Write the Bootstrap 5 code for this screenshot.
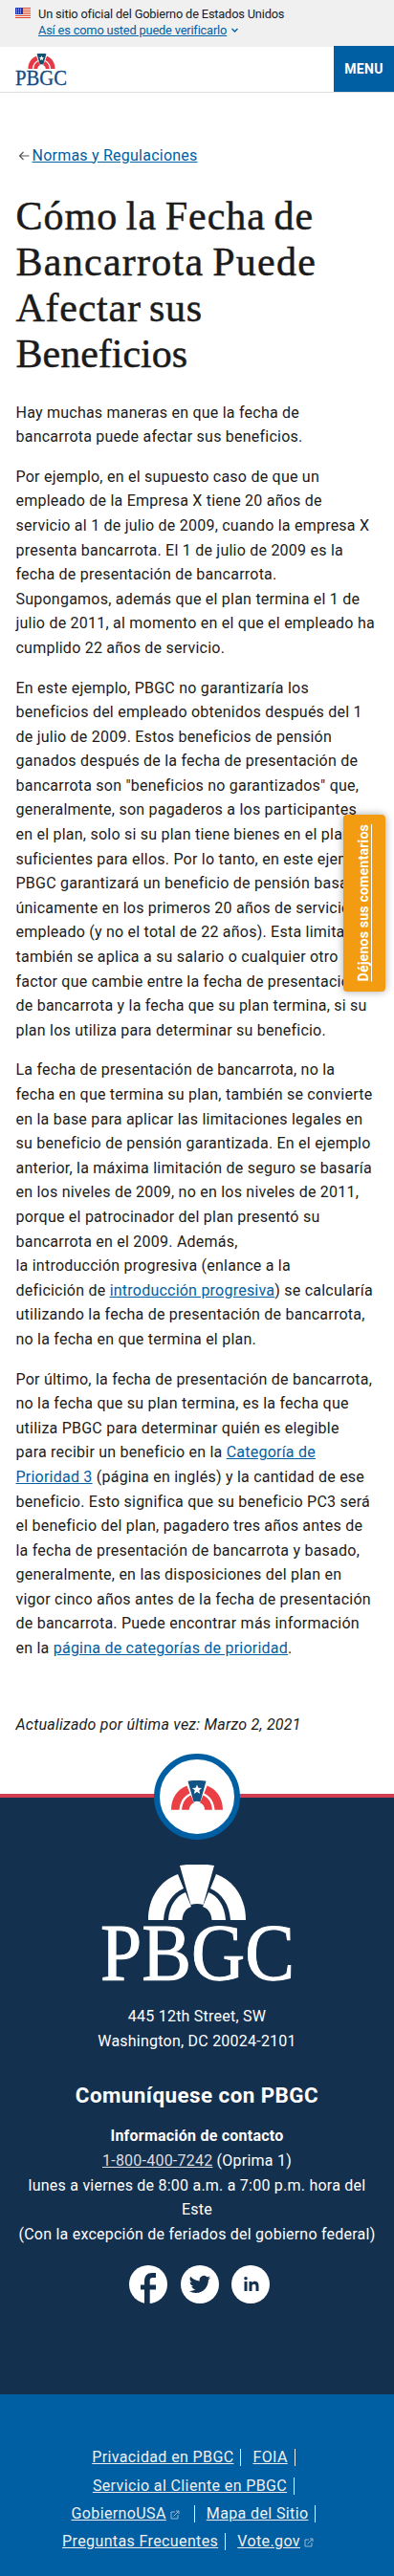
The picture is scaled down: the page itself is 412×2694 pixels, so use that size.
<!DOCTYPE html>
<html lang="es">
<head>
<meta charset="utf-8">
<meta name="viewport" content="width=device-width, initial-scale=1">
<title>Cómo la Fecha de Bancarrota Puede Afectar sus Beneficios | PBGC</title>
<link href="https://cdn.jsdelivr.net/npm/bootstrap@5.3.0/dist/css/bootstrap.min.css" rel="stylesheet">
<style>
body{font-family:Roboto,"Liberation Sans",sans-serif;font-size:16px;line-height:25.6px;letter-spacing:.23px;color:#1b1b1b;overflow-x:hidden}
a{color:#005ea2}
.gov-banner{background:#f0f0f0;height:49px;padding:7px 16px 0;font-size:12.8px;line-height:16.5px;letter-spacing:-.17px}
.gov-flag{margin:1px 8px 0 0;flex:none}
.site-head{height:48px;border-bottom:1px solid #dcdee0}
.site-logo{margin:6px 0 0 16px}
.menu-btn{width:63px;margin-top:-1px;background:#005ea2;color:#fff;font-weight:700;font-size:14px;letter-spacing:.3px;border:0;border-radius:0}
main{padding:52.7px 16.5px 58.6px;white-space:nowrap}
.back-arrow{margin:0 3px 0 2px}
.page-title{font-family:"Liberation Serif",serif;font-size:42px;line-height:48px;letter-spacing:1.02px;word-spacing:-3px;font-weight:400;margin:26.6px 0 24.7px;-webkit-text-stroke:.5px #1b1b1b}
.title-wide{letter-spacing:1.27px}
.title-snug{letter-spacing:.75px}
.title-tight{letter-spacing:0}
main p{margin:0 0 16px}
.updated{margin-top:54.8px}
.feedback{position:absolute;left:359px;top:852px;width:44px;height:185px;background:#f39c12;border-radius:4px;box-shadow:0 0 8px rgba(0,0,0,.35);z-index:3}
.feedback a{writing-mode:vertical-rl;transform:rotate(180deg);color:#fff;font-weight:700;font-size:14.2px;letter-spacing:.15px}
.foot-main{background:#14304f;border-top:4px solid #d03d50;height:628px;color:#fff;text-align:center;position:relative;white-space:nowrap}
.foot-main a{color:#dcdee0}
.seal{position:absolute;left:161px;top:-46px;width:90px;height:90px;border:6px solid #005ea2;border-radius:50%;background:#fff}
.seal svg{margin-top:22px;color:#e93f45;--wedge:#125384;--star:#fff}
.foot-logo{display:block;margin:0 auto;padding-top:70px;box-sizing:content-box}
.foot-address{margin-top:24.5px}
.foot-title{font-size:22.4px;font-weight:700;line-height:28px;margin:29.5px 0 16.5px;letter-spacing:.45px}
.foot-social{gap:13.3px;margin:20px 0 0 5px}
.foot-links{background:#005ea2;height:190px;padding:51.5px 7px 0 0;color:#fff;white-space:nowrap;text-align:center;line-height:29.4px;letter-spacing:.38px}
.foot-links a{color:#f0f0f0}
.foot-links .last-row{padding-right:12px}
.sep{display:inline-block;width:1px;height:18px;background:#f0f0f0;vertical-align:-4px;margin:0 12px 0 7px}
.sep-end{margin-right:0}
</style>
</head>
<body>
<svg width="0" height="0" class="position-absolute">
  <symbol id="fan" viewBox="0 0 102 58">
    <g fill="currentColor">
      <path d="M0 58C0 35 12 17 31 10L37 25C25 30 17 42 16 58Z"/>
      <path d="M21 58C22 43 29 33 39 29L45 44C39 46 36 51 35.500 58Z"/>
      <path d="M102 58C102 35 90 17 71 10L65 25C77 30 85 42 86 58Z"/>
      <path d="M81 58C80 43 73 33 63 29L57 44C63 46 66 51 66.500 58Z"/>
    </g>
    <path d="M33 1Q51-2 69 1L57.500 42Q51 40 44.500 42Z" fill="var(--wedge)"/>
    <path d="M51 8l2.700 6.400 6.900.500-5.300 4.400 1.700 6.700-6-3.700-6 3.700 1.700-6.700-5.300-4.400 6.900-.5z" fill="var(--star)"/>
  </symbol>
</svg>

<div class="gov-banner d-flex">
  <svg class="gov-flag" width="16" height="11" viewBox="0 0 16 11"><rect width="16" height="11" fill="#fff"/><path d="M0 .5h16M0 2.500h16M0 4.500h16M0 6.500h16M0 8.500h16M0 10.500h16" stroke="#db3e1f"/><rect width="8" height="7" fill="#1e33b1"/><path d="M1 1.500h6M1 3.500h6M1 5.500h6" stroke="#fff" stroke-dasharray="1 1" stroke-width=".8"/></svg>
  <div>Un sitio oficial del Gobierno de Estados Unidos<br><a href="#">Así es como usted puede verificarlo</a><svg class="ms-1" width="9" height="6" viewBox="0 0 9 6"><path d="M1.500 1l3 3 3-3" fill="none" stroke="#005ea2" stroke-width="1.300"/></svg></div>
</div>
<header class="site-head d-flex justify-content-between">
  <a class="site-logo" href="#"><svg class="d-block" width="56" height="36" viewBox="0 0 56 36"><use href="#fan" x="13" y="1" width="29" height="16" color="#e63946" style="--wedge:#11506e;--star:#fff"/><text x="0" y="33.500" font-family="Liberation Serif" font-size="23" textLength="54" lengthAdjust="spacingAndGlyphs" fill="#134a80" stroke="#134a80" stroke-width=".3" letter-spacing="0">PBGC</text></svg></a>
  <button class="menu-btn btn p-0">MENU</button>
</header>

<main>
<div><svg width="12" height="10" viewBox="0 0 12 10" class="back-arrow"><path d="M11.500 5H2M5.500 1L1.500 5l4 4" fill="none" stroke="#555" stroke-width="1.200"/></svg><a href="#">Normas y Regulaciones</a></div>
<h1 class="page-title">Cómo la Fecha de<br><span class="title-wide">Bancarrota Puede</span><br><span class="title-snug">Afectar sus</span><br><span class="title-tight">Beneficios</span></h1>
<p>Hay muchas maneras en que la fecha de<br>bancarrota puede afectar sus beneficios.</p>
<p>Por ejemplo, en el supuesto caso de que un<br>empleado de la Empresa X tiene 20 años de<br>servicio al 1 de julio de 2009, cuando la empresa X<br>presenta bancarrota. El 1 de julio de 2009 es la<br>fecha de presentación de bancarrota.<br>Supongamos, además que el plan termina el 1 de<br>julio de 2011, al momento en el que el empleado ha<br>cumplido 22 años de servicio.</p>
<p>En este ejemplo, PBGC no garantizaría los<br>beneficios del empleado obtenidos después del 1<br>de julio de 2009. Estos beneficios de pensión<br>ganados después de la fecha de presentación de<br>bancarrota son "beneficios no garantizados" que,<br>generalmente, son pagaderos a los participantes<br>en el plan, solo si su plan tiene bienes en el plan<br>suficientes para ellos. Por lo tanto, en este ejemplo,<br>PBGC garantizará un beneficio de pensión basado<br>únicamente en los primeros 20 años de servicio del<br>empleado (y no el total de 22 años). Esta limitación<br>también se aplica a su salario o cualquier otro<br>factor que cambie entre la fecha de presentación<br>de bancarrota y la fecha que su plan termina, si su<br>plan los utiliza para determinar su beneficio.</p>
<p>La fecha de presentación de bancarrota, no la<br>fecha en que termina su plan, también se convierte<br>en la base para aplicar las limitaciones legales en<br>su beneficio de pensión garantizada. En el ejemplo<br>anterior, la máxima limitación de seguro se basaría<br>en los niveles de 2009, no en los niveles de 2011,<br>porque el patrocinador del plan presentó su<br>bancarrota en el 2009. Además,<br>la introducción progresiva (enlance a la<br>deficición de <a href="#">introducción progresiva</a>) se calcularía<br>utilizando la fecha de presentación de bancarrota,<br>no la fecha en que termina el plan.</p>
<p>Por último, la fecha de presentación de bancarrota,<br>no la fecha que su plan termina, es la fecha que<br>utiliza PBGC para determinar quién es elegible<br>para recibir un beneficio en la <a href="#">Categoría de<br>Prioridad 3</a> (página en inglés) y la cantidad de ese<br>beneficio. Esto significa que su beneficio PC3 será<br>el beneficio del plan, pagadero tres años antes de<br>la fecha de presentación de bancarrota y basado,<br>generalmente, en las disposiciones del plan en<br>vigor cinco años antes de la fecha de presentación<br>de bancarrota. Puede encontrar más información<br>en la <a href="#">página de categorías de prioridad</a>.</p>
<div class="updated fst-italic">Actualizado por última vez: Marzo 2, 2021</div>
</main>

<div class="feedback d-flex align-items-center justify-content-center"><a href="#">Déjenos sus comentarios</a></div>

<footer>
<div class="foot-main">
  <div class="seal d-flex justify-content-center"><svg width="54" height="31"><use href="#fan" width="54" height="31"/></svg></div>
  <svg class="foot-logo" width="202" height="122" viewBox="0 0 202 122"><use href="#fan" x="50" y="0" width="102" height="58" color="#fff" style="--wedge:#fff;--star:none"/><text x="0" y="120.500" font-family="Liberation Serif" font-size="85" textLength="203" lengthAdjust="spacingAndGlyphs" fill="#fff" stroke="#fff" stroke-width="1" letter-spacing="0">PBGC</text></svg>
  <div class="foot-address">445 12th Street, SW<br>Washington, DC 20024-2101</div>
  <h2 class="foot-title">Comuníquese con PBGC</h2>
  <div><strong>Información de contacto</strong><br><a href="#">1-800-400-7242</a> (Oprima 1)<br>lunes a viernes de 8:00 a.m. a 7:00 p.m. hora del<br>Este<br>(Con la excepción de feriados del gobierno federal)</div>
  <div class="foot-social d-flex justify-content-center">
    <svg width="40" height="40" viewBox="0 0 40 40"><circle cx="20" cy="20" r="20" fill="#fff"/><path d="M16 40V25.500h-4v-5h4v-3.500C16 11 19 8 24 8h4v5h-3c-2.500 0-3.300 1-3.300 3v4.500H28v5h-6.300V40z" fill="#14304f"/></svg>
    <svg width="40" height="40" viewBox="0 0 40 40"><circle cx="20" cy="20" r="20" fill="#fff"/><path transform="translate(8.800 8.800) scale(.93)" d="M23.950 4.570a10 10 0 01-2.820.780 4.960 4.960 0 002.160-2.730c-.950.560-2 .960-3.130 1.190a4.920 4.920 0 00-8.380 4.480C7.690 8.100 4.070 6.130 1.640 3.160a4.920 4.920 0 001.520 6.570 4.900 4.900 0 01-2.230-.610v.060a4.920 4.920 0 003.950 4.830 5 5 0 01-2.210.080 4.940 4.940 0 004.600 3.420A9.870 9.870 0 010 19.540a14 14 0 007.550 2.210c9.050 0 14-7.500 14-13.980 0-.210 0-.420-.020-.630a9.900 9.900 0 002.420-2.570z" fill="#14304f"/></svg>
    <svg width="40" height="40" viewBox="0 0 40 40"><circle cx="20" cy="20" r="20" fill="#fff"/><path d="M13.500 17h3v10h-3zM18.500 17h3v1.400c1.500-2.500 7-2.500 7 2.800V27h-3v-5.200c0-3-4-2.600-4 0V27h-3z" fill="#14304f"/><circle cx="15" cy="13.800" r="1.800" fill="#14304f"/></svg>
  </div>
</div>
<div class="foot-links">
  <div><a href="#">Privacidad en PBGC</a><span class="sep"></span><a href="#">FOIA</a><span class="sep sep-end"></span></div>
  <div><a href="#">Servicio al Cliente en PBGC</a><span class="sep sep-end"></span></div>
  <div><a href="#">GobiernoUSA</a><svg class="ms-1 me-2" width="10" height="10" viewBox="0 0 10 10"><path d="M5 2H1v7h7V5M3.500 6.500L9 1M6 1h3v3" fill="none" stroke="#9bb8d3"/></svg><span class="sep"></span><a href="#">Mapa del Sitio</a><span class="sep sep-end"></span></div>
  <div class="last-row"><a href="#">Preguntas Frecuentes</a><span class="sep"></span><a href="#">Vote.gov</a><svg class="ms-1" width="10" height="10" viewBox="0 0 10 10"><path d="M5 2H1v7h7V5M3.500 6.500L9 1M6 1h3v3" fill="none" stroke="#9bb8d3"/></svg></div>
</div>
</footer>
<script src="https://cdn.jsdelivr.net/npm/bootstrap@5.3.0/dist/js/bootstrap.bundle.min.js"></script>
</body>
</html>
